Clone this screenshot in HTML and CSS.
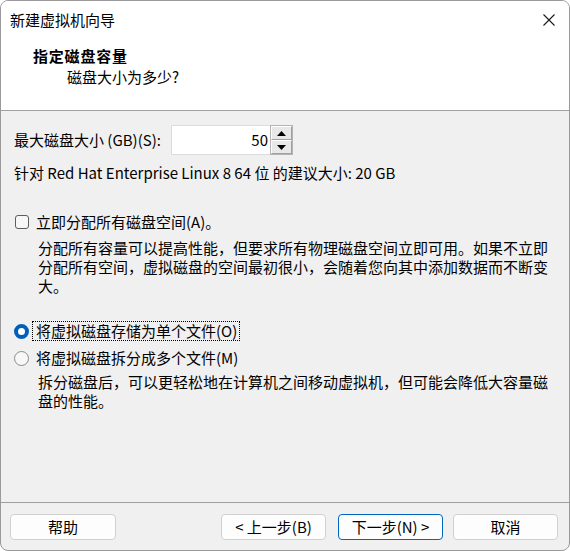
FILE: index.html
```html
<!DOCTYPE html>
<html lang="zh-CN">
<head>
<meta charset="utf-8">
<title>新建虚拟机向导</title>
<link rel="stylesheet" href="styles.css">
</head>
<body>
<div class="window">
  <div class="header">
    <div class="titlebar">
      <span class="title">新建虚拟机向导</span>
      <svg class="close" width="12" height="12" viewBox="0 0 12 12"><path d="M0.5 0.5 L11.5 11.5 M11.5 0.5 L0.5 11.5" stroke="#1a1a1a" stroke-width="1.1" fill="none"/></svg>
    </div>
    <div class="heading">指定磁盘容量</div>
    <div class="subheading">磁盘大小为多少?</div>
  </div>
  <div class="content">
    <div class="size-row">
      <span class="size-label">最大磁盘大小 (GB)(S):</span>
      <div class="spin">
        <div class="spin-input">50</div>
        <div class="spin-btns">
          <div class="spin-btn"><svg width="9" height="5" viewBox="0 0 9 5"><path d="M4.5 0 L9 5 L0 5 Z" fill="#000"/></svg></div>
          <div class="spin-btn"><svg width="9" height="5" viewBox="0 0 9 5"><path d="M0 0 L9 0 L4.5 5 Z" fill="#000"/></svg></div>
        </div>
      </div>
    </div>
    <div class="recommend">针对 Red Hat Enterprise Linux 8 64 位 的建议大小: 20 GB</div>
    <div class="option opt-check">
      <span class="checkbox"></span>
      <span class="opt-label">立即分配所有磁盘空间(A)。</span>
    </div>
    <p class="desc desc-1">分配所有容量可以提高性能，但要求所有物理磁盘空间立即可用。如果不立即分配所有空间，虚拟磁盘的空间最初很小，会随着您向其中添加数据而不断变大。</p>
    <div class="option opt-radio1">
      <span class="radio checked"></span>
      <span class="opt-label focus">将虚拟磁盘存储为单个文件(O)</span>
    </div>
    <div class="option opt-radio2">
      <span class="radio"></span>
      <span class="opt-label">将虚拟磁盘拆分成多个文件(M)</span>
    </div>
    <p class="desc desc-2">拆分磁盘后，可以更轻松地在计算机之间移动虚拟机，但可能会降低大容量磁盘的性能。</p>
  </div>
  <div class="footer">
    <button class="btn btn-help">帮助</button>
    <div class="nav">
      <button class="btn">&lt; 上一步(B)</button>
      <button class="btn btn-default">下一步(N) &gt;</button>
      <button class="btn btn-cancel">取消</button>
    </div>
  </div>
</div>
</body>
</html>
```

FILE: styles.css
```css
* { box-sizing: border-box; }
html, body {
  margin: 0;
  padding: 0;
  background: #ffffff;
}
body {
  font-family: "Noto Sans CJK SC", "Microsoft YaHei", sans-serif;
  font-size: 15px;
  color: #000;
  width: 570px;
  height: 551px;
}
.window {
  width: 570px;
  height: 551px;
  border: 1px solid #9a9a9a;
  border-radius: 8px;
  background: #f0f0f0;
  display: flex;
  flex-direction: column;
  overflow: hidden;
}
.header {
  background: #ffffff;
  height: 110px;
  border-bottom: 1px solid #a0a0a0;
  flex: none;
}
.titlebar {
  height: 37px;
  display: flex;
  align-items: center;
  justify-content: space-between;
  padding: 0 14px 0 9px;
}
.title {
  line-height: 20px;
}
.close { display: block; }
.heading {
  margin-top: 8px;
  padding-left: 32px;
  font-weight: bold;
  line-height: 20px;
  letter-spacing: 0.8px;
}
.subheading {
  padding-left: 66px;
  line-height: 21px;
}
.content {
  flex: 1;
  padding: 14px 16px 0 13px;
}
.size-row {
  display: flex;
  align-items: center;
  height: 30px;
}
.size-label {
  width: 157px;
  flex: none;
  line-height: 20px;
}
.spin {
  display: flex;
  height: 30px;
}
.spin-input {
  width: 99px;
  background: #fff;
  border: 1px solid #dcdcdc;
  border-right: none;
  text-align: right;
  padding-right: 2px;
  line-height: 27px;
}
.spin-btns {
  width: 23px;
  display: flex;
  flex-direction: column;
  border: 1px solid #b4b4b4;
  background: #f0f0f0;
}
.spin-btn {
  flex: 1;
  display: flex;
  align-items: center;
  justify-content: center;
  background: #e8e8e8;
  border: 1px solid #ffffff;
  border-right-color: #a0a0a0;
  border-bottom-color: #a0a0a0;
}
.spin-btn svg { display: block; }
.recommend {
  margin-top: 8px;
  line-height: 20px;
}
.option {
  display: flex;
  align-items: center;
  height: 20px;
}
.opt-check { margin-top: 29px; }
.opt-radio1 { margin-top: 26px; }
.opt-radio2 { margin-top: 7px; }
.checkbox {
  width: 14px;
  height: 14px;
  margin-left: 1px;
  border: 1px solid #5d5d5d;
  border-radius: 3px;
  background: #f7f7f7;
  flex: none;
}
.opt-check .opt-label { margin-left: 7px; }
.radio {
  width: 15px;
  height: 15px;
  border-radius: 50%;
  border: 1px solid #8a8a8a;
  background: #f7f7f7;
  flex: none;
}
.radio.checked {
  border: 4px solid #005fb8;
  background: #ffffff;
}
.opt-radio1 .opt-label,
.opt-radio2 .opt-label {
  margin-left: 4px;
  padding: 0 2px 0 3px;
  line-height: 18px;
}
.focus {
  outline: 1px dotted #000;
}
.opt-label { line-height: 20px; }
.desc {
  margin: 0;
  padding-left: 24px;
  width: 539px;
  line-height: 19px;
}
.desc-1 { margin-top: 6px; }
.desc-2 { margin-top: 4px; }
.footer {
  flex: none;
  height: 48px;
  border-top: 1px solid #a0a0a0;
  display: flex;
  justify-content: space-between;
  align-items: flex-start;
  padding: 11px 11px 0 9px;
}
.nav {
  display: flex;
}
.btn {
  font: inherit;
  width: 105px;
  height: 26px;
  padding: 0;
  background: #fdfdfd;
  border: 1px solid #d0d0d0;
  border-radius: 4px;
  color: #000;
  line-height: 22px;
}
.btn-help { width: 106px; }
.btn-default {
  margin-left: 12px;
  border-color: #0067c0;
}
.btn-cancel { margin-left: 10px; }
```
